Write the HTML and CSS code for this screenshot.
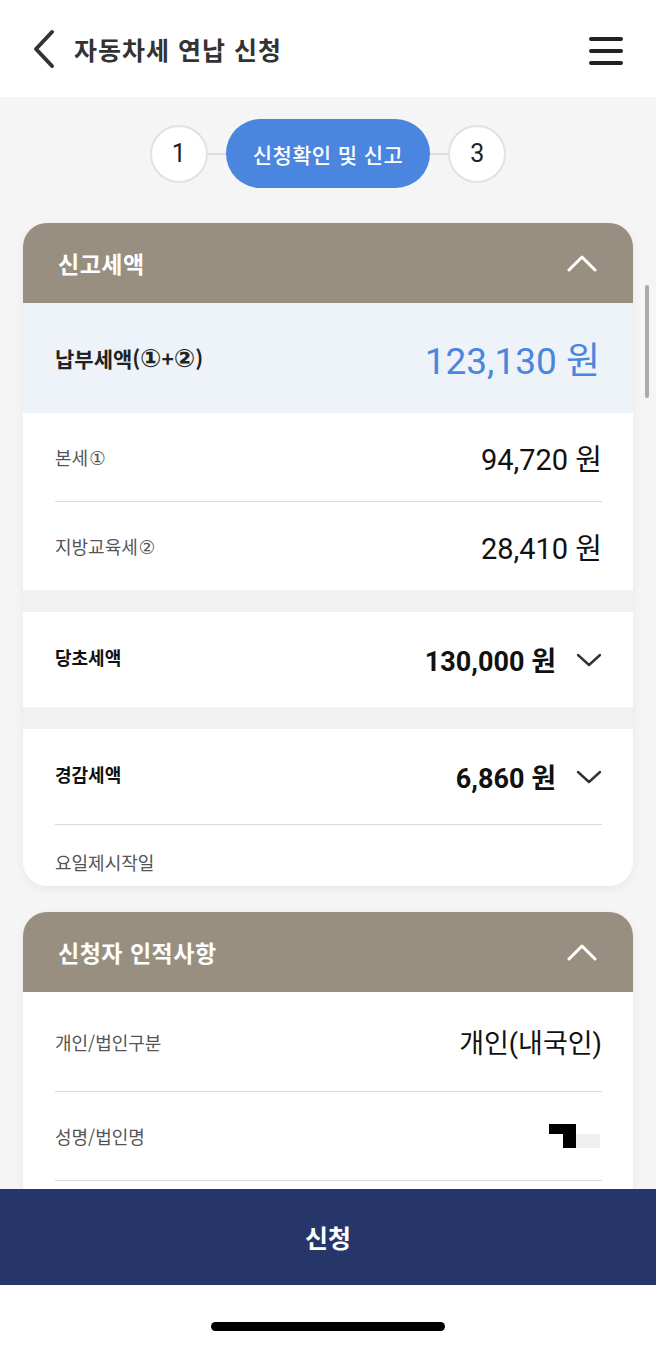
FILE: index.html
```html
<!DOCTYPE html>
<html lang="ko">
<head>
    <meta charset="UTF-8">
    <link rel="stylesheet" href="styles.css">
</head>
<body>

<div class="screen">
    <header class="topbar">
        <svg class="back" width="26" height="40" viewBox="0 0 26 40">
            <path d="M21 3 L5 20 L21 37" fill="none" stroke="#333" stroke-width="4" stroke-linecap="round" stroke-linejoin="round"/>
        </svg>
        <h1>자동차세 연납 신청</h1>
        <svg class="menu" width="34" height="30" viewBox="0 0 34 30">
            <path d="M2 3 H32 M2 15 H32 M2 27 H32" stroke="#222" stroke-width="4" stroke-linecap="round"/>
        </svg>
    </header>

    <main class="content">
        <div class="stepper">
            <span class="step">1</span>
            <span class="step-line"></span>
            <span class="step current">신청확인 및 신고</span>
            <span class="step-line"></span>
            <span class="step">3</span>
        </div>

        <section class="card">
            <div class="card-head">
                <h2>신고세액</h2>
                <svg width="30" height="18" viewBox="0 0 30 18">
                    <path d="M2 16 L15 3 L28 16" fill="none" stroke="#fff" stroke-width="3" stroke-linecap="round" stroke-linejoin="round"/>
                </svg>
            </div>
            <div class="pay">
                <span class="pay-label">납부세액(<b class="circ">①</b>+<b class="circ">②</b>)</span>
                <span class="pay-amount">123,130 원</span>
            </div>
            <div class="group">
                <div class="row">
                    <span class="label">본세<b class="circ">①</b></span>
                    <span class="value">94,720 원</span>
                </div>
                <div class="row">
                    <span class="label">지방교육세<b class="circ">②</b></span>
                    <span class="value">28,410 원</span>
                </div>
            </div>
            <div class="group">
                <div class="row tall">
                    <span class="label strong">당초세액</span>
                    <span class="value bold">130,000 원
                        <svg width="26" height="16" viewBox="0 0 26 16"><path d="M2 3 L13 13 L24 3" fill="none" stroke="#333" stroke-width="2.4" stroke-linecap="round" stroke-linejoin="round"/></svg>
                    </span>
                </div>
            </div>
            <div class="group">
                <div class="row tall">
                    <span class="label strong">경감세액</span>
                    <span class="value bold">6,860 원
                        <svg width="26" height="16" viewBox="0 0 26 16"><path d="M2 3 L13 13 L24 3" fill="none" stroke="#333" stroke-width="2.4" stroke-linecap="round" stroke-linejoin="round"/></svg>
                    </span>
                </div>
                <div class="row cut">
                    <span class="label">요일제시작일</span>
                </div>
            </div>
        </section>

        <section class="card">
            <div class="card-head">
                <h2>신청자 인적사항</h2>
                <svg width="30" height="18" viewBox="0 0 30 18">
                    <path d="M2 16 L15 3 L28 16" fill="none" stroke="#fff" stroke-width="3" stroke-linecap="round" stroke-linejoin="round"/>
                </svg>
            </div>
            <div class="group">
                <div class="row person">
                    <span class="label">개인/법인구분</span>
                    <span class="value">개인(내국인)</span>
                </div>
                <div class="row">
                    <span class="label">성명/법인명</span>
                    <span class="masked"><i class="mask-a"></i><i class="mask-b"></i><i class="mask-c"></i></span>
                </div>
                <div class="row"></div>
            </div>
        </section>

        <span class="scrollbar"></span>
    </main>

    <div class="submit">신청</div>
    <div class="home"><span class="home-bar"></span></div>
</div>

</body>
</html>
```

FILE: styles.css
```css
body {
    margin: 0;
    font-family: "Noto Sans CJK KR", "Noto Sans", sans-serif;
    color: #222;
    background: #fff;
}
.screen {
    width: 656px;
    height: 1345px;
    display: flex;
    flex-direction: column;
    overflow: hidden;
}
.topbar {
    height: 97px;
    flex: none;
    display: flex;
    align-items: center;
    padding: 0 33px 0 31px;
    background: #fff;
}
.topbar h1 {
    margin: 0 0 0 17px;
    font-size: 25px;
    font-weight: 700;
    color: #333;
    flex: 1;
    letter-spacing: 1px;
}
.menu {
    margin-top: 4px;
}
.content {
    height: 1092px;
    flex: none;
    position: relative;
    overflow: hidden;
    background: #f5f5f6;
    padding-top: 22px;
    box-sizing: border-box;
}
.stepper {
    display: flex;
    justify-content: center;
    align-items: center;
}
.step {
    width: 54px;
    height: 54px;
    border: 2px solid #e2e2e2;
    border-radius: 50%;
    background: #fff;
    display: flex;
    align-items: center;
    justify-content: center;
    font-family: Roboto, sans-serif;
    font-size: 25px;
    color: #222;
}
.step.current {
    width: auto;
    height: 69px;
    border: none;
    border-radius: 35px;
    padding: 0 27px;
    background: #4a86e0;
    color: #fff;
    font-family: "Noto Sans CJK KR", sans-serif;
    font-size: 21px;
    font-weight: 500;
    letter-spacing: 0.4px;
}
.step-line {
    width: 18px;
    height: 2px;
    background: #dcdcdc;
}
.card {
    margin: 35px 23px 0;
    border-radius: 24px;
    overflow: hidden;
    background: #f1f1f1;
    box-shadow: 0 3px 10px rgba(0, 0, 0, 0.06);
}
.card + .card {
    margin-top: 26px;
}
.card-head {
    height: 80px;
    background: #988f80;
    display: flex;
    align-items: center;
    justify-content: space-between;
    padding: 0 36px 0 35px;
}
.card-head h2 {
    margin: 0;
    font-size: 23px;
    font-weight: 700;
    color: #fff;
    letter-spacing: 0.5px;
}
.pay {
    height: 110px;
    background: #eef2f9;
    display: flex;
    align-items: center;
    justify-content: space-between;
    padding: 0 33px 0 32px;
}
.pay-label {
    font-size: 21px;
    font-weight: 700;
    color: #222;
}
.circ {
    font-family: "DejaVu Sans", sans-serif;
    font-weight: 700;
    font-size: 1.2em;
    line-height: 1;
}
.label .circ {
    font-weight: 400;
    font-size: 1.05em;
    margin-left: 1px;
}
.pay-amount {
    font-family: Roboto, "Noto Sans CJK KR", sans-serif;
    font-size: 37px;
    color: #4a86dc;
}
.group {
    background: #fff;
}
.group + .group {
    margin-top: 22px;
}
.row {
    height: 88px;
    margin: 0 31px 0 32px;
    display: flex;
    align-items: center;
    justify-content: space-between;
}
.row + .row {
    border-top: 1px solid #dadada;
}
.row.tall {
    height: 95px;
}
.row.person {
    height: 99px;
}
.row.cut {
    height: 62px;
    align-items: flex-start;
    padding-top: 24px;
    box-sizing: border-box;
}
.label {
    font-size: 18px;
    color: #555;
}
.label.strong {
    font-size: 18px;
    font-weight: 700;
    color: #111;
    margin-top: -6px;
}
.value {
    font-family: Roboto, "Noto Sans CJK KR", sans-serif;
    font-size: 29px;
    color: #111;
    display: flex;
    align-items: center;
}
.row.person .value {
    font-size: 27px;
}
.value.bold {
    font-weight: 700;
    font-size: 27px;
}
.value svg {
    margin-left: 20px;
}
.masked {
    display: flex;
    align-items: flex-start;
    height: 24px;
    margin-right: 2px;
}
.masked i {
    display: block;
}
.mask-a {
    width: 14px;
    height: 10px;
    background: #000;
}
.mask-b {
    width: 13px;
    height: 24px;
    background: #000;
}
.mask-c {
    width: 24px;
    height: 14px;
    margin-top: 10px;
    background: #f0f0f0;
}
.scrollbar {
    position: absolute;
    right: 7px;
    top: 188px;
    width: 4px;
    height: 113px;
    border-radius: 2px;
    background: #a9a9a9;
}
.submit {
    height: 96px;
    flex: none;
    background: #27366a;
    color: #fff;
    font-size: 25px;
    font-weight: 700;
    display: flex;
    align-items: center;
    justify-content: center;
}
.home {
    height: 60px;
    flex: none;
    background: #fff;
    display: flex;
    justify-content: center;
    padding-top: 37px;
    box-sizing: border-box;
}
.home-bar {
    width: 234px;
    height: 9px;
    border-radius: 5px;
    background: #000;
}
```
